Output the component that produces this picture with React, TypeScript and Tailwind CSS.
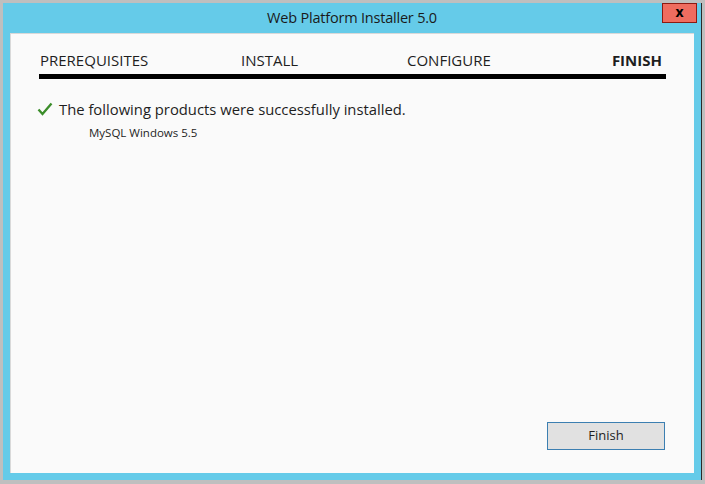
export default function App() {
    const font = { fontFamily: '"Open Sans", "Noto Sans", "Liberation Sans", sans-serif' }

    return (
        <div className="w-[705px] h-[484px] bg-[#bfbfbf] pt-[3px] pl-[3px] pr-[3px] pb-[4px]" style={font}>
            <div className="relative w-full h-full bg-[#65cbe9] border-r border-[#2b2b2b] flex flex-col px-[7px] pb-[7px]">
                {/* barra de título */}
                <div className="h-[30px] flex items-center justify-center text-[14.5px] text-[#1a1a1a] tracking-[-0.2px]">
                    Web Platform Installer 5.0
                </div>
                <button className="absolute top-0 right-[4px] w-[35px] h-[20px] bg-[#ef6c5f] border border-[#8c1a12] flex items-center justify-center">
                    <span className="text-[14px] font-bold leading-none text-black -mt-[2px]">x</span>
                </button>

                {/* conteúdo */}
                <div className="flex-1 bg-[#fafafa] border-t border-l border-[#d9d9d9] flex flex-col px-[28px]">
                    <div className="flex items-end h-[39px] pb-[5px] text-[15px] text-[#1e1e1e] leading-none">
                        <div className="w-[202px] pl-[1px]">PREREQUISITES</div>
                        <div className="w-[166px]">INSTALL</div>
                        <div className="flex-1">CONFIGURE</div>
                        <div className="font-bold pr-[4px]">FINISH</div>
                    </div>
                    <div className="h-[5px] bg-black mt-[1px]" />

                    <div className="flex items-center mt-[19px] -ml-[2px]">
                        <svg width="16" height="14" viewBox="0 0 16 14" className="mr-[6px]">
                            <path d="M1.5 7.5 L5.5 12 L14.5 1.5" fill="none" stroke="#3b8d2a" strokeWidth="2.3" />
                        </svg>
                        <span className="text-[14.8px] text-[#1e1e1e]">The following products were successfully installed.</span>
                    </div>
                    <div className="text-[11.5px] text-[#1e1e1e] ml-[50px] mt-[4px]">MySQL Windows 5.5</div>

                    <div className="flex-1" />
                    <div className="flex justify-end pr-[1px] pb-[23px]">
                        <button className="w-[118px] h-[28px] bg-[#e1e1e1] border border-[#3c7fb1] text-[13px] text-[#1e1e1e]">
                            Finish
                        </button>
                    </div>
                </div>
            </div>
        </div>
    )
}
